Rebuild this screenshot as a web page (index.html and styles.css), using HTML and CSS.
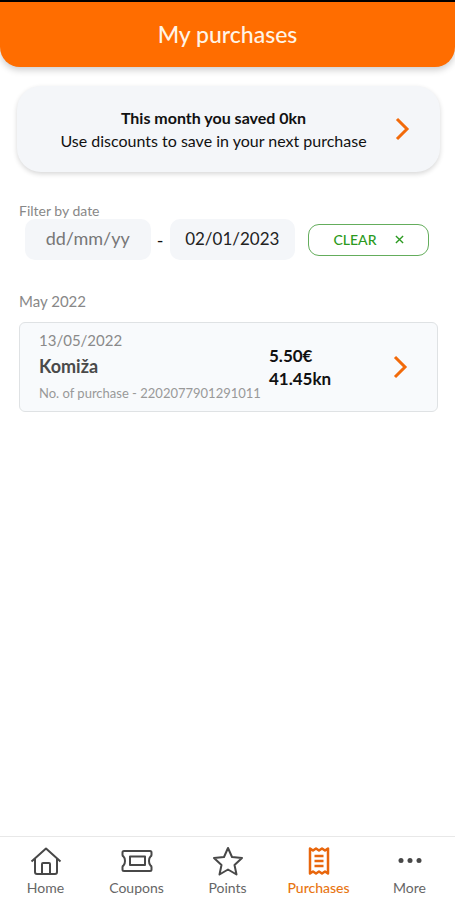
FILE: index.html
```html
<!DOCTYPE html>
<html lang="en">
<head>
<meta charset="utf-8">
<meta name="viewport" content="width=device-width, initial-scale=1">
<title>My purchases</title>
<link rel="stylesheet" href="styles.css">
</head>
<body>
<header class="header"><h1>My purchases</h1></header>
<main class="content">
  <a class="savings" href="#discounts">
    <span class="savings-text"><strong>This month you saved 0kn</strong><span>Use discounts to save in your next purchase</span></span>
    <svg class="chevron" viewBox="0 0 16 26" aria-hidden="true"><path d="M3 3l10 10L3 23"/></svg>
  </a>
  <form class="filter">
    <label class="filter-label" for="from">Filter by date</label>
    <div class="filter-row">
      <input class="date" id="from" type="text" placeholder="dd/mm/yy">
      <span class="dash">-</span>
      <input class="date" type="text" value="02/01/2023" aria-label="To date">
      <button class="clear" type="button">CLEAR
        <svg viewBox="0 0 10 10" aria-hidden="true"><path d="M1 1l8 8M9 1L1 9"/></svg>
      </button>
    </div>
  </form>
  <h2 class="month">May 2022</h2>
  <a class="purchase" href="#purchase">
    <span class="details">
      <span class="day">13/05/2022</span>
      <strong class="store">Komiža</strong>
      <span class="number">No. of purchase - 2202077901291011</span>
    </span>
    <span class="amount"><span>5.50€</span><span>41.45kn</span></span>
    <svg class="chevron" viewBox="0 0 16 26" aria-hidden="true"><path d="M3 3l10 10L3 23"/></svg>
  </a>
</main>
<nav class="tabs">
  <a href="#home"><svg viewBox="0 0 32 30" aria-hidden="true"><path d="M1.500 15.500L16 2.500l14.500 13M5 13v13q0 2 2 2h18q2 0 2-2V13M12 28V18q0-1 1-1h6q1 0 1 1v10"/></svg>Home</a>
  <a href="#coupons"><svg viewBox="0 0 32 30" aria-hidden="true"><path d="M3 5h26q1.500 0 1.500 1.500V9q0 1-1 1.500-1.500 1.500-1.500 4.500t1.500 4.500q1 .5 1 1.500v2.500q0 1.500-1.500 1.500H3q-1.500 0-1.500-1.500V21q0-1 1-1.500Q4 18 4 15t-1.500-4.500q-1-.5-1-1.500V6.500Q1.500 5 3 5zM9 10.500h15v8.500H9z"/></svg>Coupons</a>
  <a href="#points"><svg viewBox="0 0 32 30" aria-hidden="true"><path d="M16 2l4 9 10 1-7.500 7 2 9.500L16 23.500l-8.500 5 2-9.500L2 12l10-1z"/></svg>Points</a>
  <a class="active" href="#purchases"><svg viewBox="0 0 32 30" aria-hidden="true"><path d="M7 2.500l3 2 3-2 3 2 3-2 3 2 3-2v25l-3-2-3 2-3-2-3 2-3-2-3 2zM11.500 10h9M11.500 15h9M11.500 20h9"/></svg>Purchases</a>
  <a href="#more"><svg class="dots" viewBox="0 0 32 30" aria-hidden="true"><circle cx="7" cy="14.500" r="2.500"/><circle cx="16" cy="14.500" r="2.500"/><circle cx="25" cy="14.500" r="2.500"/></svg>More</a>
</nav>
</body>
</html>
```
FILE: styles.css
```css
* { box-sizing: border-box; }
body {
  margin: 0;
  min-height: 100vh;
  display: flex;
  flex-direction: column;
  background: #fff;
  color: #111;
  font-family: Lato, "Noto Sans", sans-serif;
}
a { color: inherit; text-decoration: none; }
h1, h2 { margin: 0; font-weight: 400; }
.header {
  background: #ff6d00;
  border-radius: 0 0 20px 20px;
  border-top: 2px solid #000;
  padding: 18px 16px 19px;
  text-align: center;
  color: #fff4e6;
  box-shadow: 0 3px 7px rgba(0, 0, 0, .2);
}
.header h1 { font-size: 23px; line-height: 28px; font-weight: 500; }
.content { flex: 1; padding: 19px 15px 19px 17px; }
.chevron {
  width: 16px;
  height: 26px;
  flex: none;
  fill: none;
  stroke: #f26a0a;
  stroke-width: 3;
}
.savings {
  display: flex;
  align-items: center;
  padding: 20px 30px 20px 16px;
  background: #f4f6f9;
  border-radius: 24px;
  box-shadow: 0 2px 5px rgba(0, 0, 0, .16);
}
.savings-text {
  flex: 1;
  display: flex;
  flex-direction: column;
  text-align: center;
  font-size: 16px;
  line-height: 23px;
}
.filter { margin-top: 30px; }
.filter-label {
  display: block;
  padding-left: 2px;
  font-size: 14px;
  line-height: 17px;
  color: #888;
}
.filter-row {
  display: flex;
  align-items: center;
  padding: 0 11px 0 8px;
}
.date {
  flex: 1;
  min-width: 0;
  height: 41px;
  padding: 0 0 2px;
  border: 0;
  border-radius: 10px;
  background: #f4f6f9;
  color: #222;
  text-align: center;
  font: 17px/24px Lato, "Noto Sans", sans-serif;
}
.date::placeholder { color: #777; opacity: 1; font-size: 18px; }
.dash { width: 19px; text-align: center; font-size: 18px; }
.clear {
  display: flex;
  align-items: center;
  justify-content: center;
  gap: 18px;
  width: 121px;
  height: 32px;
  margin-left: 13px;
  padding: 0;
  border: 1px solid #64ad5c;
  border-radius: 11px;
  background: #fff;
  color: #2b9a20;
  font: 500 14px/20px Lato, "Noto Sans", sans-serif;
}
.clear svg { width: 9px; height: 9px; fill: none; stroke: currentColor; stroke-width: 1.5; }
.month {
  margin: 31px 2px 11px;
  font-size: 15px;
  line-height: 20px;
  color: #888;
}
.purchase {
  display: flex;
  align-items: center;
  margin: 0 2px;
  padding: 6px 29px 7px 19px;
  border: 1px solid #dfe2e4;
  border-radius: 6px;
  background: #f8fafc;
}
.details { display: flex; flex-direction: column; width: 230px; }
.day { font-size: 15px; line-height: 22px; color: #8a8a8a; }
.store { font-size: 18px; line-height: 31px; color: #4a4a4a; }
.number { font-size: 13px; line-height: 22px; color: #999; white-space: nowrap; }
.amount {
  flex: 1;
  display: flex;
  flex-direction: column;
  font-size: 17px;
  line-height: 23px;
  font-weight: 700;
}
.tabs {
  display: grid;
  grid-template-columns: repeat(5, 1fr);
  padding: 9px 0 4px;
  border-top: 1px solid #e8e8e8;
}
.tabs a {
  display: flex;
  flex-direction: column;
  align-items: center;
  gap: 4px;
  font-size: 14px;
  line-height: 16px;
  color: #666;
}
.tabs svg {
  width: 32px;
  height: 30px;
  fill: none;
  stroke: #484848;
  stroke-width: 2;
  stroke-linejoin: round;
}
.tabs .dots { fill: #484848; stroke: none; }
.tabs .active { color: #e87512; font-weight: 500; }
.tabs .active svg { stroke: #e8660c; stroke-width: 2.5; }
```
